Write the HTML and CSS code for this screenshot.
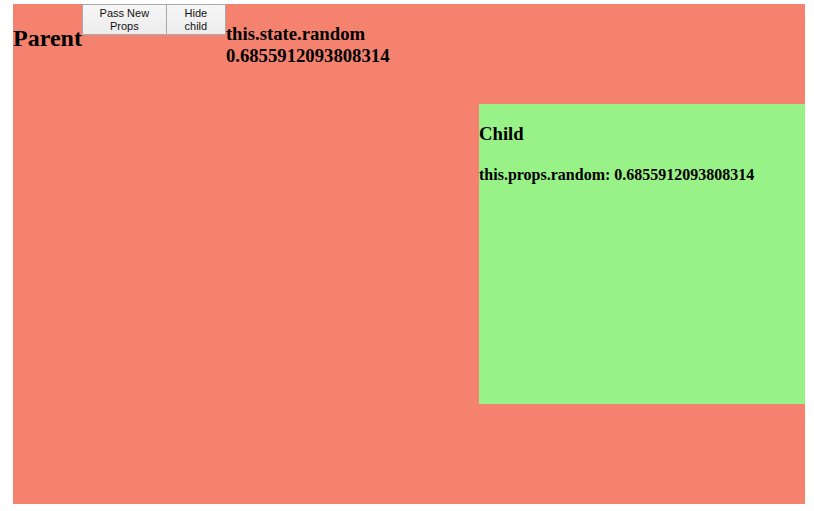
FILE: index.html
```html
<!DOCTYPE html>
<html>
<head>
<meta charset="utf-8">
<link rel="stylesheet" href="styles.css">
</head>
<body>
<div class="parent">
  <div class="top-row">
    <h2 class="parent-title">Parent</h2>
    <button class="btn btn-pass">Pass New<br>Props</button>
    <button class="btn btn-hide">Hide<br>child</button>
    <h3 class="state">this.state.random<br>0.6855912093808314</h3>
  </div>
  <div class="child">
    <h3 class="child-title">Child</h3>
    <h4 class="props">this.props.random: 0.6855912093808314</h4>
  </div>
</div>
</body>
</html>
```
FILE: styles.css
```css
html, body {
  background: #ffffff;
}
body {
  margin: 4px 9px 0 13px;
  font-family: "Liberation Serif", "Times New Roman", serif;
  color: #000;
}
.parent {
  position: relative;
  width: 792px;
  height: 500px;
  background: #f4826f;
}
.top-row {
  display: flex;
  align-items: flex-start;
}
.parent-title {
  font-size: 24px;
  font-weight: bold;
  margin: 20px 0 0 0;
  line-height: 28px;
}
.btn {
  font-family: "Liberation Sans", Arial, sans-serif;
  font-size: 11px;
  line-height: 13px;
  color: #111;
  background: linear-gradient(#f6f6f6, #ececec);
  border: 1px solid #a9a9a9;
  margin: 0;
  padding: 2px 4px 2px 4px;
  height: 31px;
  text-align: center;
}
.btn-pass {
  width: 85px;
}
.btn-hide {
  width: 59px;
  border-left: none;
}
.state {
  font-size: 18.72px;
  font-weight: bold;
  margin: 18.72px 0 0 0;
  line-height: 22px;
}
.child {
  position: absolute;
  top: 100px;
  right: 0;
  width: 326px;
  height: 300px;
  background: #98f287;
  overflow: hidden;
}
.child-title {
  font-size: 18.72px;
  font-weight: bold;
  margin: 18.72px 0 0 0;
}
.props {
  font-size: 16px;
  font-weight: bold;
  margin: 21.28px 0 0 0;
}
```
